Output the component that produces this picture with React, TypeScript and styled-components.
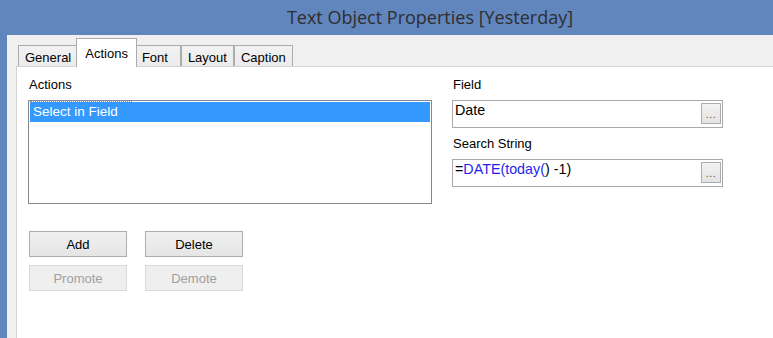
import React from 'react';
import styled, { createGlobalStyle } from 'styled-components';

const GlobalStyle = createGlobalStyle`
  html, body {
    margin: 0;
    padding: 0;
    background: #6185bd;
  }
  * {
    box-sizing: border-box;
  }
`;

const Viewport = styled.div`
  width: 773px;
  height: 338px;
  overflow: hidden;
`;

const Frame = styled.div`
  width: 860px;
  height: 400px;
  background: #6185bd;
  display: flex;
  flex-direction: column;
`;

const TitleBar = styled.div`
  height: 35px;
  flex-shrink: 0;
  display: flex;
  align-items: center;
  justify-content: center;
  font-family: 'Open Sans', 'Noto Sans', sans-serif;
  font-size: 18px;
  color: #2e2e2e;
  padding-bottom: 1px;
`;

const WindowBody = styled.div`
  flex: 1;
  margin-left: 7px;
  background: #f0f0f0;
  padding: 3px 9px 0 9px;
  display: flex;
  flex-direction: column;
  font-family: 'Liberation Sans', Arial, sans-serif;
  font-size: 13px;
  color: #000;
`;

const TabStrip = styled.div`
  display: flex;
  align-items: flex-end;
  padding-left: 2px;
  margin-bottom: -1px;
  position: relative;
  z-index: 1;
`;

const Tab = styled.div<{ $active?: boolean; $minWidth?: number }>`
  min-width: ${(p) => (p.$minWidth ? `${p.$minWidth}px` : 'auto')};
  border: 1px solid #acacac;
  border-bottom: none;
  white-space: nowrap;
  ${(p) =>
    p.$active
      ? `
    height: 29px;
    margin: 0 -2px;
    padding: 7px 8px 0 8px;
    background: #fff;
    position: relative;
    z-index: 2;
  `
      : `
    height: 21px;
    margin-bottom: 1px;
    padding: 4px 6px 0 6px;
    background: linear-gradient(#f2f2f2, #ebebeb);
  `}
`;

const Panel = styled.div`
  flex: 1;
  background: #fff;
  border: 1px solid #d4d4d4;
  display: flex;
  gap: 20px;
  padding: 10px 0 0 11px;
`;

const LeftColumn = styled.div`
  width: 404px;
  display: flex;
  flex-direction: column;
`;

const RightColumn = styled.div`
  width: 271px;
  display: flex;
  flex-direction: column;
`;

const Label = styled.div<{ $spaced?: boolean }>`
  line-height: 15px;
  margin-bottom: 8px;
  margin-top: ${(p) => (p.$spaced ? '8px' : '0')};
  padding-left: 1px;
`;

const ListBox = styled.div`
  height: 104px;
  border: 1px solid #828790;
  padding: 1px;
`;

const ListItem = styled.div`
  position: relative;
  height: 20px;
  line-height: 20px;
  padding-left: 3px;
  background: #3399ff;
  color: #fff;
  font-size: 13.5px;

  &::before {
    content: '';
    position: absolute;
    left: 0;
    top: -1px;
    width: 102px;
    border-top: 1px dotted #d9863f;
  }
`;

const ButtonGrid = styled.div`
  display: grid;
  grid-template-columns: 98px 98px;
  column-gap: 18px;
  row-gap: 8px;
  margin: 27px 0 0 1px;
`;

const Button = styled.button`
  height: 26px;
  padding: 0;
  border: 1px solid #acacac;
  border-radius: 0;
  background: linear-gradient(#f0f0f0, #e5e5e5);
  font-family: 'Liberation Sans', Arial, sans-serif;
  font-size: 13px;
  color: #000;

  &:disabled {
    border-color: #d9d9d9;
    background: #efefef;
    color: #a0a0a0;
  }
`;

const InputBox = styled.div`
  height: 28px;
  border: 1px solid #a9a9a9;
  display: flex;
  align-items: flex-start;
  padding: 0 1px 0 2px;
  background: #fff;
`;

const InputValue = styled.div`
  flex: 1;
  font-size: 14.3px;
  line-height: 17px;
  padding-top: 1px;
  white-space: nowrap;
`;

const Fn = styled.span`
  color: #1f1ff0;
`;

const BrowseButton = styled.div`
  width: 20px;
  height: 21px;
  margin-top: 2px;
  border: 1px solid #acacac;
  background: linear-gradient(#f2f2f2, #e3e3e3);
  display: flex;
  align-items: flex-end;
  justify-content: center;
  font-size: 11px;
  line-height: 11px;
  padding-bottom: 3px;
  color: #6b4f35;
  letter-spacing: 0.5px;
`;

export default function App() {
  return (
    <Viewport>
      <GlobalStyle />
      <Frame>
        <TitleBar>Text Object Properties [Yesterday]</TitleBar>
        <WindowBody>
          <TabStrip>
            <Tab>General</Tab>
            <Tab $active>Actions</Tab>
            <Tab $minWidth={46}>Font</Tab>
            <Tab>Layout</Tab>
            <Tab>Caption</Tab>
          </TabStrip>
          <Panel>
            <LeftColumn>
              <Label>Actions</Label>
              <ListBox>
                <ListItem>Select in Field</ListItem>
              </ListBox>
              <ButtonGrid>
                <Button>Add</Button>
                <Button>Delete</Button>
                <Button disabled>Promote</Button>
                <Button disabled>Demote</Button>
              </ButtonGrid>
            </LeftColumn>
            <RightColumn>
              <Label>Field</Label>
              <InputBox>
                <InputValue>Date</InputValue>
                <BrowseButton>...</BrowseButton>
              </InputBox>
              <Label $spaced>Search String</Label>
              <InputBox>
                <InputValue>
                  =<Fn>DATE(today(</Fn>) -1)
                </InputValue>
                <BrowseButton>...</BrowseButton>
              </InputBox>
            </RightColumn>
          </Panel>
        </WindowBody>
      </Frame>
    </Viewport>
  );
}
